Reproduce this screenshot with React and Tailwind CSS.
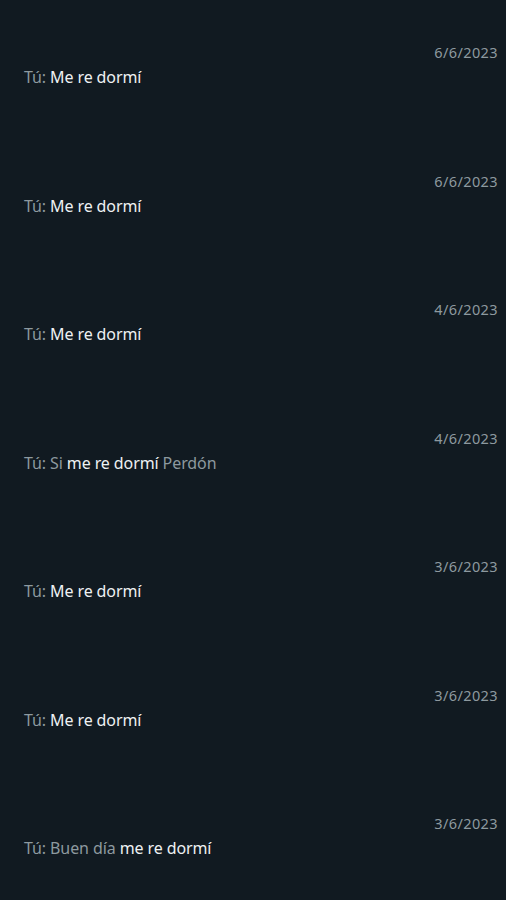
export default function App() {
  const rows = [
    { date: "6/6/2023", parts: [["Me re dormí", true]] },
    { date: "6/6/2023", parts: [["Me re dormí", true]] },
    { date: "4/6/2023", parts: [["Me re dormí", true]] },
    { date: "4/6/2023", parts: [["Si ", false], ["me re dormí", true], [" Perdón", false]] },
    { date: "3/6/2023", parts: [["Me re dormí", true]] },
    { date: "3/6/2023", parts: [["Me re dormí", true]] },
    { date: "3/6/2023", parts: [["Buen día ", false], ["me re dormí", true]] },
  ];
  return (
    <div className="w-[506px] h-[900px] bg-[#111a21] overflow-hidden" style={{ fontFamily: '"Noto Sans", "Open Sans", sans-serif' }}>
      {rows.map((r, i) => (
        <div key={i} className="h-[128.5px] pt-[43px] pl-6 pr-2 flex flex-col">
          <div className="self-end text-[14.5px] leading-[18px] text-[#8d999f] tracking-[0.4px]">{r.date}</div>
          <div className="mt-[5px] text-[16px] leading-[22px] text-[#8d999f] whitespace-pre tracking-[-0.1px]">
            Tú:{" "}
            {r.parts.map(([t, hi], j) => (
              <span key={j} className={hi ? "text-[#eef1f3]" : ""}>{t}</span>
            ))}
          </div>
        </div>
      ))}
    </div>
  );
}
